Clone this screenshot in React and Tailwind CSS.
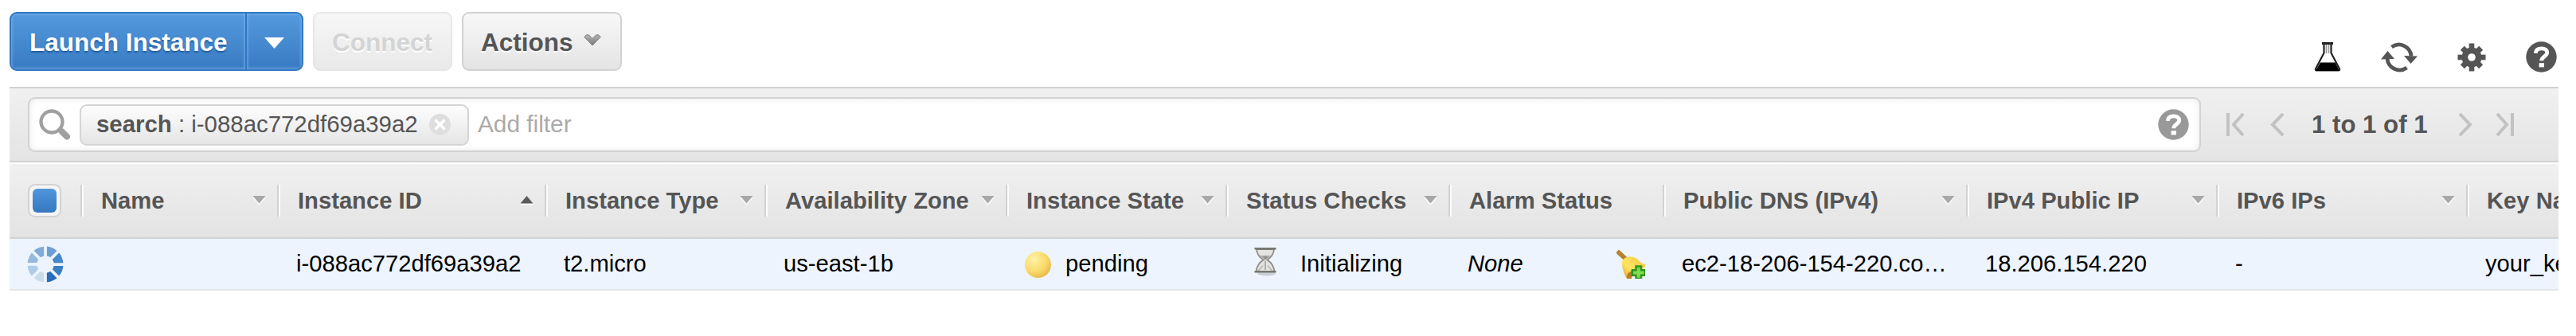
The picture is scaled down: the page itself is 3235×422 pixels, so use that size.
const FONT = "font-['Liberation_Sans',Arial,sans-serif]";

function Caret({ up }) {
  return (
    <svg width="17" height="12" viewBox="0 0 17 12" className="shrink-0">
      {up ? (
        <g>
          <path d="M0 11.5h17l-1-2H1z" fill="#fafafa" />
          <path d="M8.5 0L16.5 9.5H0.5z" fill="#5c5c5c" />
        </g>
      ) : (
        <g>
          <path d="M0.5 2.5h16L8.5 12z" fill="#fafafa" />
          <path d="M0.5 0h16L8.5 9.5z" fill="#a8a8a8" />
        </g>
      )}
    </svg>
  );
}

function HeadCell({ width, label, sort }) {
  return (
    <div className={`flex h-10 shrink-0 items-center border-l-2 border-[#d2d2d2] shadow-[inset_2px_0_0_#fbfbfb] ${width} pl-[24px] pr-[14px]`}>
      <span className="grow whitespace-nowrap font-bold leading-[34px]">{label}</span>
      {sort && <Caret up={sort === "up"} />}
    </div>
  );
}

function Cell({ width, children }) {
  return <div className={`flex shrink-0 items-center whitespace-nowrap pl-[24px] pt-[1px] ${width}`}>{children}</div>;
}

function Help({ fill, glyph }) {
  return (
    <svg width="39" height="39" viewBox="0 0 39 39" className="shrink-0">
      <circle cx="19.5" cy="19.5" r="19.2" fill={fill} />
      <path d="M12.300 14.800C12.600 10.500 15.500 8.800 19.700 8.800c4.300 0 7 2 7 5.200 0 4.800-7 5.200-7 10.300" fill="none" stroke={glyph} strokeWidth="4.800" />
      <rect x="16.600" y="27.200" width="6.400" height="5.200" fill={glyph} />
    </svg>
  );
}

function Flask() {
  return (
    <svg width="34" height="37" viewBox="0 0 34 37">
      <path d="M12.500 2v11.500L2 33.500c-.5 1 0 2 1 2h28c1 0 1.500-1 1-2L21.500 13.500V2" fill="#fff" stroke="#222" strokeWidth="2.200" />
      <path d="M10 1.500h14" stroke="#222" strokeWidth="3" />
      <path d="M15.500 3v11M18.500 3v11" stroke="#999" strokeWidth="1.600" fill="none" />
      <path d="M8 25.500h18.500l5.500 10.500H2z" fill="#000" />
    </svg>
  );
}

function Refresh() {
  return (
    <svg width="46" height="38" viewBox="0 0 46 38" fill="none">
      <path d="M13.500 6A15.500 15.500 0 0 1 38 17.500" stroke="#555" strokeWidth="4.800" />
      <path d="M32.500 32A15.500 15.500 0 0 1 8 20" stroke="#555" strokeWidth="4.800" />
      <path d="M29 17l17 .5L37.500 27z" fill="#555" />
      <path d="M0 21.500L8.500 11l8.500 10z" fill="#555" />
    </svg>
  );
}

function Gear() {
  return (
    <svg width="36" height="36" viewBox="-18 -18 36 36">
      {[0, 90].map((a) => (
        <rect key={a} x="-3.300" y="-17.500" width="6.600" height="35" fill="#555" transform={`rotate(${a})`} />
      ))}
      {[45, 135].map((a) => (
        <rect key={a} x="-3.500" y="-16.500" width="7" height="33" fill="#555" transform={`rotate(${a})`} />
      ))}
      <circle r="12.500" fill="#555" />
      <circle r="4.800" fill="#fff" />
    </svg>
  );
}

function Pager({ kind }) {
  const shapes = {
    first: "M2 0v29M21 1L9 14.500L21 28",
    prev: "M16 1L3 14.500L16 28",
    next: "M1 1L14 14.500L1 28",
    last: "M2 1L14 14.500L2 28M21 0v29",
  };
  return (
    <svg width="23" height="29" viewBox="0 0 23 29" className="shrink-0">
      <path d={shapes[kind]} fill="none" stroke="#c2c2c2" strokeWidth="4" />
    </svg>
  );
}

const SEGMENTS = ["#6d9fd3", "#4688c8", "#3a7fc4", "#2a6dba", "#c9dcec", "#b0cbe5", "#96b9de", "#7fabd8"];

function Spinner() {
  return (
    <svg width="46" height="46" viewBox="-23 -23 46 46">
      {SEGMENTS.map((color, i) => (
        <path key={color} d="M1.900-22.400A22.500 22.500 0 0 1 14.500-17.100L6.200-8.800A10.600 10.600 0 0 0 1.900-10.500z" fill={color} transform={`rotate(${i * 45})`} />
      ))}
    </svg>
  );
}

function Hourglass() {
  return (
    <svg width="28" height="38" viewBox="0 0 28 38">
      <ellipse cx="15.500" cy="33.500" rx="11.500" ry="3" fill="#c9d0d8" />
      <path d="M3 3C3.500 10 7.500 13 11.500 16.500 7.500 19 3.500 23 2.500 31h23c-1-8-5-12-9-14.500C20.500 13 24.500 10 25 3z" fill="#e4e3de" stroke="#8b8b85" strokeWidth="1.800" />
      <path d="M8.500 11.500h11L14 16.500zM5 30.500l6-7M23 30.500l-6-7" fill="#8a8a84" stroke="#b5b4ae" strokeWidth="1.500" />
      <path d="M0.500 2.200h27M0.500 31.200h27" stroke="#77776f" strokeWidth="2.600" />
      <path d="M14 18v11" stroke="#9d9c96" strokeWidth="1.500" />
    </svg>
  );
}

function Bell() {
  return (
    <svg width="36" height="36" viewBox="0 0 36 36">
      <defs>
        <linearGradient id="bell" x1="0" y1="1" x2="1" y2="0">
          <stop offset="0" stopColor="#d79a25" />
          <stop offset=".4" stopColor="#ffe565" />
          <stop offset="1" stopColor="#f0c63a" />
        </linearGradient>
      </defs>
      <path d="M1 1.500L12 11.500" stroke="#b5832b" strokeWidth="5.500" />
      <path d="M7 14C9 9 17 7 24 10c4 2 5 6 12 8v3L17 36h-4C10 31 6 21 7 14z" fill="url(#bell)" />
      <path d="M13 35.500c0-5 2-8 6-9v9.500h-6z" fill="#b87c22" />
      <path d="M24.500 20.500h6.500v4.700h4.700v6.500H31v4.300h-6.500v-4.300h-4.700v-6.500h4.700z" fill="#7fdc4f" stroke="#2f9422" strokeWidth="2.500" />
    </svg>
  );
}

export default function App() {
  return (
    <div className={`h-[422px] w-[3235px] overflow-hidden bg-white pl-[12px] pr-[22px] text-[29.2px] text-[#555] ${FONT}`}>
      <div className="flex h-[109px] items-start justify-between pt-[15px]">
        <div className="flex text-[31.5px] font-bold">
          <div className="flex h-[74px] w-[369px] overflow-hidden rounded-[9px] border-2 border-[#2f78c2] bg-linear-to-b from-[#5499de] to-[#387bc3] text-white">
            <div className="flex w-[296px] items-center border-r-2 border-[#2f78c2] pl-[23px] pt-[3px] shadow-[inset_0_0_4px_#8fbdec] [text-shadow:0_2px_2px_#205d9d]">
              <span className="whitespace-nowrap">Launch Instance</span>
            </div>
            <div className="flex grow items-center justify-center pt-1 shadow-[inset_0_0_4px_#8fbdec]">
              <svg width="25" height="14" viewBox="0 0 25 14"><path d="M0 0h25L12.500 14z" fill="#fff" /></svg>
            </div>
          </div>
          <div className="ml-[12px] flex h-[74px] w-[175px] items-center rounded-[9px] border-2 border-[#e6e6e6] bg-linear-to-b from-[#f7f7f7] to-[#e9e9e9] pl-[22px] pt-[3px] text-[#d4d4d4] [text-shadow:0_2px_0_#fff]">Connect</div>
          <div className="ml-[12px] flex h-[74px] w-[201px] items-center rounded-[9px] border-2 border-[#d2d2d2] bg-linear-to-b from-[#f8f8f8] to-[#e4e4e4] pl-[22px] pt-[3px] [text-shadow:0_2px_0_#fff]">
            <span className="w-[129px]">Actions</span>
            <svg width="22" height="15" viewBox="0 0 22 15" className="mb-[6px]">
              <defs>
                <linearGradient id="chevron" x1="0" y1="0" x2="0" y2="1">
                  <stop offset="0" stopColor="#b4b4b4" />
                  <stop offset="1" stopColor="#787878" />
                </linearGradient>
              </defs>
              <path d="M.8 3.500L3.300.8h3L11 5.500 15.700.8h3l2.500 2.700L11 14z" fill="url(#chevron)" stroke="#808080" strokeWidth="1" />
            </svg>
          </div>
        </div>
        <div className="flex items-center gap-[50px] pr-[2px] pt-[37px]">
          <Flask />
          <Refresh />
          <Gear />
          <Help fill="#555" glyph="#fff" />
        </div>
      </div>

      <div className="flex h-[95px] items-center border-y-2 border-[#d2d2d2] bg-linear-to-b from-[#f0f0f0] to-[#e4e4e4] pl-[23px]">
        <div className="flex h-[69px] w-[2729px] shrink-0 items-center rounded-[9px] border-2 border-[#d2d2d2] bg-white pl-[12px] pr-[13px] shadow-[inset_0_0_8px_#e8e8e8]">
          <svg width="39" height="40" viewBox="0 0 39 40" className="shrink-0" fill="none" stroke="#a0a0a0">
            <circle cx="16" cy="16" r="13.500" strokeWidth="4.300" />
            <path d="M25.500 26l3 3" strokeWidth="6" />
            <path d="M29 28.500l6 6" strokeWidth="8" strokeLinecap="round" />
          </svg>
          <div className="ml-[12px] flex h-[52px] w-[489px] shrink-0 items-center rounded-[9px] border-2 border-[#d5d5d5] bg-linear-to-b from-[#fdfdfd] to-[#e5e5e5] pl-[19px]">
            <span className="w-[418px] whitespace-nowrap text-[29.4px]"><b>search</b> : i-088ac772df69a39a2</span>
            <svg width="27" height="27" viewBox="0 0 27 27"><circle cx="13.500" cy="13.500" r="13.500" fill="#dedede" /><path d="M7.500 7.500l12 12M19.500 7.500l-12 12" stroke="#fff" strokeWidth="3.500" /></svg>
          </div>
          <span className="ml-[11px] grow text-[29.8px] text-[#aaa]">Add filter</span>
          <Help fill="#999" glyph="#fff" />
        </div>
        <div className="flex items-center pl-[32px]">
          <Pager kind="first" />
          <span className="ml-[32px] flex"><Pager kind="prev" /></span>
          <span className="ml-[29px] w-[185px] whitespace-nowrap pt-[2px] text-[31.2px] font-bold">1 to 1 of 1</span>
          <Pager kind="next" />
          <span className="ml-[23px] flex"><Pager kind="last" /></span>
        </div>
      </div>

      <div className="mt-[2px] flex h-[94px] items-center overflow-hidden border-b-2 border-[#d2d2d2] bg-linear-to-b from-[#f0f0f0] to-[#e3e3e3]">
        <div className="flex w-[89px] shrink-0 pl-[23px]">
          <div className="flex h-[42px] w-[42px] items-center justify-center rounded-[9px] border-2 border-[#d2d2d2] bg-[#f5f5f5]">
            <div className="h-[30px] w-[30px] rounded-[6px] bg-linear-to-b from-[#5096dc] to-[#3578c0]" />
          </div>
        </div>
        <HeadCell width="w-[247px]" label="Name" sort="down" />
        <HeadCell width="w-[336px]" label="Instance ID" sort="up" />
        <HeadCell width="w-[276px]" label="Instance Type" sort="down" />
        <HeadCell width="w-[303px]" label="Availability Zone" sort="down" />
        <HeadCell width="w-[276px]" label="Instance State" sort="down" />
        <HeadCell width="w-[280px]" label="Status Checks" sort="down" />
        <HeadCell width="w-[269px]" label="Alarm Status" />
        <HeadCell width="w-[381px]" label="Public DNS (IPv4)" sort="down" />
        <HeadCell width="w-[314px]" label="IPv4 Public IP" sort="down" />
        <HeadCell width="w-[314px]" label="IPv6 IPs" sort="down" />
        <HeadCell width="w-[314px]" label="Key Name" />
      </div>

      <div className="flex h-[65px] items-stretch overflow-hidden border-b-2 border-[#e2e4e6] bg-[#edf4fd] text-black">
        <div className="flex w-[89px] shrink-0 items-center pl-[22px]"><Spinner /></div>
        <Cell width="w-[247px]" />
        <Cell width="w-[336px]">i-088ac772df69a39a2</Cell>
        <Cell width="w-[276px]">t2.micro</Cell>
        <Cell width="w-[303px]">us-east-1b</Cell>
        <Cell width="w-[276px]">
          <span className="mr-[18px] h-[33px] w-[33px] rounded-full bg-[radial-gradient(circle_at_35%_30%,#fff3a8,#fbd96a_50%,#d9a035)]" />
          pending
        </Cell>
        <Cell width="w-[280px]">
          <span className="ml-[12px] mr-[30px] flex pb-[7px]"><Hourglass /></span>
          Initializing
        </Cell>
        <Cell width="w-[269px]">
          <i className="w-[187px]">None</i>
          <Bell />
        </Cell>
        <Cell width="w-[381px]">ec2-18-206-154-220.co…</Cell>
        <Cell width="w-[314px]">18.206.154.220</Cell>
        <Cell width="w-[314px]">-</Cell>
        <Cell width="w-[314px]">your_key</Cell>
      </div>
    </div>
  );
}
